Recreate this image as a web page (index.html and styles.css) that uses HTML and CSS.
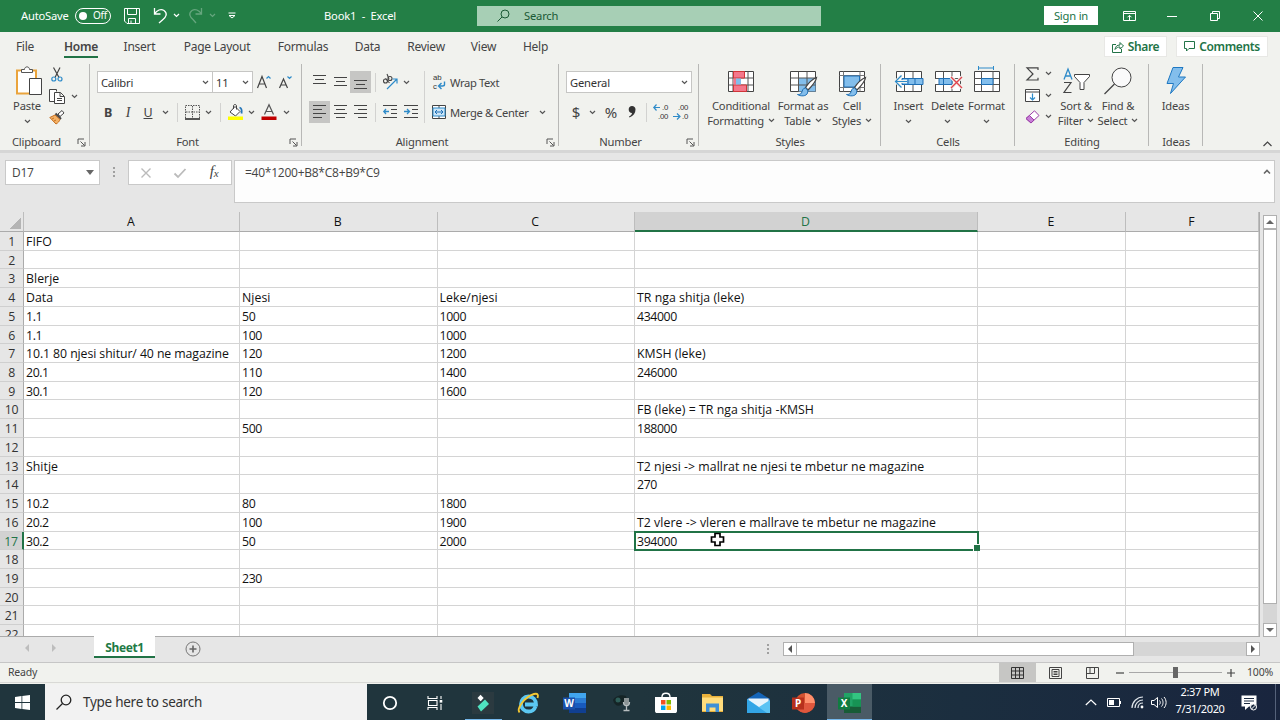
FILE: index.html
```html
<!DOCTYPE html>
<html lang="en">
<head>
  <meta charset="UTF-8" />
  <title>Book1 - Excel</title>
  <meta name="viewport" content="width=device-width, initial-scale=1" />
  <link rel="stylesheet" href="styles.css">
</head>
<body>
  <!-- shared icons -->
  <svg class="defs">
    <symbol id="chev" viewBox="0 0 7 5"><path d="M1 1l2.5 2.5L6 1" fill="none" stroke="currentColor" stroke-width="1.2"/></symbol>
    <symbol id="launch" viewBox="0 0 9 9"><path d="M1 6V1h6M3.5 3.500l4 4M8 4v4H4" fill="none" stroke="#555" stroke-width="1"/></symbol>
    <symbol id="brush" viewBox="0 0 22 22"><path d="M20.500 1.500c-5 2-9 7-11 10l2.500 2.500c4-4 8-8 8.500-12.500z" fill="#fff" stroke="#444" stroke-width="1.300"/><path d="M9.500 12c-3 0-3 3-4 5-1 1.500-2.500 1.500-4 1.500 3 2 9 2 10-1.500.6-2 .2-3.500-2-5z" fill="#83beec" stroke="#1e6fb5"/></symbol>
  </svg>

  <header class="titlebar">
    <span class="autosave">AutoSave</span>
    <span class="toggle"><i></i>Off</span>
    <svg width="16" height="16" viewBox="0 0 16 16"><path d="M.5.5h15v15H3l-2.500-2.500zM3.500.5v6h9v-6M4.500 15.500v-5h7v5M7 15v-2.500" fill="none" stroke="#fff"/></svg>
    <svg width="15" height="17" viewBox="0 0 15 17"><path d="M1.500 1v6h6M1.500 7C4 3 8 1.500 11 3.500c4 3 2 6.500-1 9L6 16" fill="none" stroke="#fff" stroke-width="1.300"/></svg>
    <svg class="chev"><use href="#chev"/></svg>
    <svg class="dim" width="15" height="17" viewBox="0 0 15 17"><path d="M13.500 1v6h-6M13.500 7C11 3 7 1.500 4 3.500c-4 3-2 6.500 1 9L8 16" fill="none" stroke="#fff" stroke-width="1.300"/></svg>
    <svg class="chev dim"><use href="#chev"/></svg>
    <svg width="8" height="7" viewBox="0 0 8 7"><path d="M.5 1h7" stroke="#fff"/><path d="M1 3.500l3 2.500 3-2.500z" fill="none" stroke="#fff"/></svg>
    <span class="doc">Book1 &nbsp;- &nbsp;Excel</span>
    <div class="search">
      <svg width="13" height="13" viewBox="0 0 13 13"><circle cx="8" cy="5" r="4" fill="none" stroke="#1b5a35"/><path d="M5 8l-4.500 4.500" stroke="#1b5a35"/></svg>
      Search
    </div>
    <button class="signin">Sign in</button>
    <svg width="13" height="10" viewBox="0 0 13 10"><path d="M.5.5h12v9H.5zM.5 2.500h12M6.500 9V4.500M4.500 6.300l2-2 2 2" fill="none" stroke="#fff"/></svg>
    <svg width="10" height="10" viewBox="0 0 10 10"><path d="M0 5.500h10" stroke="#fff"/></svg>
    <svg width="10" height="10" viewBox="0 0 10 10"><path d="M.5 2.500h7v7h-7zM2.500 2.500v-2h7v7h-2" fill="none" stroke="#fff"/></svg>
    <svg width="10" height="10" viewBox="0 0 10 10"><path d="M.5.5l9 9M9.500.5l-9 9" stroke="#fff"/></svg>
  </header>

  <nav class="tabs">
    <span>File</span><span class="active">Home</span><span>Insert</span><span>Page Layout</span><span>Formulas</span><span>Data</span><span>Review</span><span>View</span><span>Help</span>
    <div class="tab-actions">
      <button class="share"><svg width="12" height="12" viewBox="0 0 12 12"><path d="M4 3.500H.5v8h9V8M3 8.500c.3-3 2-4.500 5-4.500V1.500L11.500 5 8 8V6C6 6 4.500 6.500 3 8.500z" fill="none" stroke="#217346"/></svg>Share</button>
      <button class="comments"><svg width="11" height="11" viewBox="0 0 11 11"><path d="M.5.5h10v7H5L2.500 10V7.500h-2z" fill="none" stroke="#217346"/></svg>Comments</button>
    </div>
  </nav>

  <section class="ribbon">
    <div class="group g-clipboard">
      <div class="body">
        <div class="big paste">
          <svg width="28" height="30" viewBox="0 0 28 30"><path d="M2 4.500h19v23H2z" fill="#fff" stroke="#eaa43c" stroke-width="2"/><path d="M5 6h13" stroke="#fff"/><path d="M6.500 6.500v-3h3c0-3.500 5-3.500 5 0h3v3z" fill="#fff" stroke="#555"/><path d="M14.500 12.500h12v16h-12z" fill="#fff" stroke="#444"/></svg>
          <span>Paste</span>
          <svg class="chev"><use href="#chev"/></svg>
        </div>
        <div class="clip-tools">
          <svg width="12" height="15" viewBox="0 0 12 15"><path d="M2.500.5l5.500 10M9 .5L4 10.500" stroke="#444" stroke-width="1.200"/><circle cx="2.800" cy="12" r="2" fill="none" stroke="#2e8bc9" stroke-width="1.200"/><circle cx="9" cy="12" r="2" fill="none" stroke="#2e8bc9" stroke-width="1.200"/></svg><i></i>
          <svg width="16" height="15" viewBox="0 0 16 15"><path d="M5.500 12.500h-5V.5h7v2" fill="#fff" stroke="#444"/><path d="M5.500 3.500h6l4 4v7h-10zM11 3.500v4h4M8 9.500h5M8 11.500h5" fill="#fff" stroke="#444"/></svg>
          <svg class="chev"><use href="#chev"/></svg>
          <svg width="16" height="15" viewBox="0 0 16 15"><path d="M9 4l4-3.500L15 3l-4 3.500z" fill="#fff" stroke="#444"/><path d="M6.500 3.500l5.500 5.500" stroke="#444" stroke-width="2"/><path d="M6 5L.8 7.500 7 14c2-1 3.500-3 4-4.500z" fill="#f4b266" stroke="#c66f20"/><path d="M3 9l2-1M5 11l2-1" stroke="#c66f20"/></svg>
        </div>
      </div>
      <div class="name"><span>Clipboard</span><svg class="launch"><use href="#launch"/></svg></div>
    </div>

    <div class="group g-font">
      <div class="body rows">
        <div class="font-top">
          <div class="select">Calibri<svg class="chev"><use href="#chev"/></svg></div>
          <div class="select size">11<svg class="chev"><use href="#chev"/></svg></div>
          <svg width="14" height="14" viewBox="0 0 14 14"><path d="M.5 13L5 1.500 9.500 13M2 9h6" fill="none" stroke="#444" stroke-width="1.200"/><path d="M9.500 3.500L11.500 1.500l2 2" fill="none" stroke="#2e8bc9" stroke-width="1.200"/></svg>
          <svg width="13" height="14" viewBox="0 0 13 14"><path d="M.5 13L4.500 4 8.500 13M2 10h5" fill="none" stroke="#444" stroke-width="1.200"/><path d="M8.500 1.500l2 2 2-2" fill="none" stroke="#2e8bc9" stroke-width="1.200"/></svg>
        </div>
        <div class="font-bottom">
          <b>B</b><em>I</em><u>U</u>
          <svg class="chev"><use href="#chev"/></svg>
          <i class="sep"></i>
          <svg width="15" height="15" viewBox="0 0 15 15"><path d="M.5 13V.5h14V13M7.500 1v12M1 7h13" fill="none" stroke="#555" stroke-dasharray="1.500 1"/><path d="M0 14h15" stroke="#222" stroke-width="1.500"/></svg>
          <svg class="chev"><use href="#chev"/></svg>
          <i class="sep"></i>
          <svg width="16" height="16" viewBox="0 0 16 16"><path d="M7 2.500l5 5-4.500 4.500-5.500-4z" fill="#fff" stroke="#444"/><path d="M5.500 5V2c0-2 3-2 3 0v3.500" fill="none" stroke="#444"/><path d="M11.500 3.500c2 .5 2.500 3 2 6" fill="none" stroke="#2475b8" stroke-width="1.800"/><path d="M0 12.500h15V16H0z" fill="#ffff00"/></svg>
          <svg class="chev"><use href="#chev"/></svg>
          <svg width="16" height="16" viewBox="0 0 16 16"><path d="M3.500 10.500L8 .8l4.500 9.700M5 7.500h6" fill="none" stroke="#555" stroke-width="1.200"/><path d="M.5 12.500h15V16H.5z" fill="#c00000"/></svg>
          <svg class="chev"><use href="#chev"/></svg>
        </div>
      </div>
      <div class="name"><span>Font</span><svg class="launch"><use href="#launch"/></svg></div>
    </div>

    <div class="group g-align">
      <div class="body">
        <div class="align-left">
          <svg width="13" height="14" viewBox="0 0 13 14"><path d="M0 .5h13M2 4.500h9M0 8.500h13" stroke="#444"/></svg>
          <svg width="13" height="14" viewBox="0 0 13 14"><path d="M0 2.500h13M2 6.500h9M0 10.500h13" stroke="#444"/></svg>
          <span class="on"><svg width="13" height="14" viewBox="0 0 13 14"><path d="M0 5.500h13M2 9.500h9M0 13.500h13" stroke="#444"/></svg></span>
          <i class="sep"></i>
          <svg width="16" height="16" viewBox="0 0 16 16"><g fill="none" stroke="#444" stroke-width="1.100"><circle cx="3.500" cy="7" r="2"/><path d="M3.500 4.500l4 4.500"/><circle cx="8" cy="4.500" r="2"/><path d="M5 0l2 5"/></g><path d="M5 15L14.500 5.500M10.500 5h4.500v4.500" fill="none" stroke="#2e8bc9" stroke-width="1.200"/></svg>
          <svg class="chev"><use href="#chev"/></svg>
          <span class="on"><svg width="13" height="14" viewBox="0 0 13 14"><path d="M0 .5h13M0 4.500h9M0 8.500h13M0 12.500h9" stroke="#444"/></svg></span>
          <svg width="13" height="14" viewBox="0 0 13 14"><path d="M0 .5h13M2 4.500h9M0 8.500h13M2 12.500h9" stroke="#444"/></svg>
          <svg width="13" height="14" viewBox="0 0 13 14"><path d="M0 .5h13M4 4.500h9M0 8.500h13M4 12.500h9" stroke="#444"/></svg>
          <i class="sep"></i>
          <svg width="14" height="14" viewBox="0 0 14 14"><path d="M0 .5h14M8 4.500h6M8 8.500h6M0 12.500h14" stroke="#444"/><path d="M6 6.500H1M3 4L.8 6.500 3 9" fill="none" stroke="#2e8bc9" stroke-width="1.300"/></svg>
          <svg width="14" height="14" viewBox="0 0 14 14"><path d="M0 .5h14M8 4.500h6M8 8.500h6M0 12.500h14" stroke="#444"/><path d="M0 6.500h5M3 4l2.500 2.500L3 9" fill="none" stroke="#2e8bc9" stroke-width="1.300"/></svg>
        </div>
        <div class="align-right">
          <div><svg width="14" height="18" viewBox="0 0 14 18"><text x="1" y="7" class="tiny">ab</text><text x="1" y="16" class="tiny">c</text><path d="M12.500 8.500v3c0 1-1 1.500-2 1.500H7M9.500 10L6.500 13l3 3" fill="none" stroke="#2e8bc9" stroke-width="1.400"/></svg><span>Wrap Text</span></div>
          <div><svg width="14" height="14" viewBox="0 0 14 14"><path d="M.5.5h13v13H.5z" fill="#fff" stroke="#444"/><path d="M7 .5V3M7 11v2.500" stroke="#444"/><path d="M1 3h12v8H1z" fill="#cde6f7" stroke="#2e8bc9"/><path d="M3 7h8M5 5L3 7l2 2M9 5l2 2-2 2" fill="none" stroke="#1e6fb5"/></svg><span>Merge &amp; Center</span><svg class="chev"><use href="#chev"/></svg></div>
        </div>
      </div>
      <div class="name"><span>Alignment</span><svg class="launch"><use href="#launch"/></svg></div>
    </div>

    <div class="group g-number">
      <div class="body rows">
        <div class="select general">General<svg class="chev"><use href="#chev"/></svg></div>
        <div class="number-bottom">
          <span>$</span>
          <svg class="chev"><use href="#chev"/></svg>
          <span>%</span>
          <svg width="8" height="12" viewBox="0 0 8 12"><path d="M4 0c2 0 3.500 1.200 3.500 3.500C7.500 7 5.500 10 1.500 11.500l-.5-1c2-1 2.800-2 3-3.500C2 7 .7 5.500.7 3.500.7 1.500 2 0 4 0z" fill="#333"/></svg>
          <i class="sep"></i>
          <svg width="16" height="18" viewBox="0 0 16 18"><path d="M7 4.500H1M3.500 1.500l-2.700 3 2.700 3" fill="none" stroke="#2e8bc9" stroke-width="1.200"/><text x="9" y="7" class="tiny">.0</text><text x="5" y="16" class="tiny">.00</text></svg>
          <svg width="16" height="18" viewBox="0 0 16 18"><text x="5" y="7" class="tiny">.00</text><text x="9" y="16" class="tiny">.0</text><path d="M0 13.500h6M4 10.500l3 3-3 3" fill="none" stroke="#2e8bc9" stroke-width="1.200"/></svg>
        </div>
      </div>
      <div class="name"><span>Number</span><svg class="launch"><use href="#launch"/></svg></div>
    </div>

    <div class="group g-styles">
      <div class="body">
        <div class="big">
          <svg width="28" height="30" viewBox="0 0 28 30"><path d="M1.500 5.500h25v20h-25z" fill="#fff" stroke="#444"/><path d="M1.500 12h25M1.500 19h25M6 5.500v20M21 5.500v20" stroke="#555"/><path d="M6.500 5.500h11v6.500h-11zM6.500 19h13v6.500h-13z" fill="#f4788c" stroke="#d13438"/><path d="M6.500 12.500h4v6h-4z" fill="#f4788c"/><path d="M9 12.500h5v6H9z" fill="#83beec"/></svg>
          <span>Conditional</span><span>Formatting <svg class="chev"><use href="#chev"/></svg></span>
        </div>
        <div class="big">
          <svg width="28" height="30" viewBox="0 0 28 30"><path d="M1.500 5.500h25v20h-25z" fill="#fff" stroke="#444"/><path d="M9.500 12h17v13.500h-17z" fill="#83beec"/><path d="M1.500 12h25M1.500 19h25M9.500 5.500v20M18 5.500v20" stroke="#555"/><use href="#brush" x="7" y="10" width="22" height="22"/></svg>
          <span>Format as</span><span>Table <svg class="chev"><use href="#chev"/></svg></span>
        </div>
        <div class="big">
          <svg width="28" height="30" viewBox="0 0 28 30"><path d="M1.500 5.500h25v20h-25z" fill="#fff" stroke="#444"/><path d="M1.500 9.500h25M1.500 21.500h25M5.500 5.500v20M22 5.500v20" stroke="#777"/><path d="M6 10h15.500v11H6z" fill="#83beec" stroke="#1e6fb5"/><use href="#brush" x="7" y="10" width="22" height="22"/></svg>
          <span>Cell</span><span>Styles <svg class="chev"><use href="#chev"/></svg></span>
        </div>
      </div>
      <div class="name"><span>Styles</span></div>
    </div>

    <div class="group g-cells">
      <div class="body">
        <div class="big">
          <svg width="30" height="30" viewBox="0 0 30 30"><path d="M2.500 5.500h25v20h-25z" fill="#fff" stroke="#444"/><path d="M10.500 5.500v20M19 5.500v20" stroke="#555"/><path d="M8 12.500h21v6H8z" fill="#83beec" stroke="#1e6fb5"/><path d="M21 12.500v6M14 12.500v6" stroke="#1e6fb5"/><path d="M13 15.500H1.500M7.500 9.500l-6 6 6 6" fill="none" stroke="#f1f2ee" stroke-width="3"/><path d="M13 15.500H1.500M7.500 9.500l-6 6 6 6" fill="none" stroke="#2e8bc9" stroke-width="1.200"/></svg>
          <span>Insert</span><svg class="chev"><use href="#chev"/></svg>
        </div>
        <div class="big">
          <svg width="30" height="30" viewBox="0 0 30 30"><path d="M2.500 12.500v-7h25v20h-25v-7" fill="#fff" stroke="#444"/><path d="M10.500 5.500v20M19 5.500v20M2 12.500h25M2 18.500h25" stroke="#555"/><path d="M6 12.500h13v6H6z" fill="#83beec" stroke="#1e6fb5"/><path d="M10.500 12.500v6" stroke="#1e6fb5"/><path d="M18 11l11 11M29 11L18 22" stroke="#f1f2ee" stroke-width="3.500"/><path d="M18 11l11 11M29 11L18 22" stroke="#e0434c" stroke-width="1.400"/></svg>
          <span>Delete</span><svg class="chev"><use href="#chev"/></svg>
        </div>
        <div class="big">
          <svg width="30" height="30" viewBox="0 0 30 30"><path d="M2.500 5.500h25v20h-25z" fill="#fff" stroke="#444"/><path d="M9.500 5.500v20M21 5.500v20M2 12.500h25M2 18.500h25" stroke="#555"/><path d="M9.500 12.500H21v6H9.500z" fill="#83beec" stroke="#1e6fb5"/><path d="M6.500 2h15M6.500 0v4M21.500 0v4" stroke="#2e8bc9"/></svg>
          <span>Format</span><svg class="chev"><use href="#chev"/></svg>
        </div>
      </div>
      <div class="name"><span>Cells</span></div>
    </div>

    <div class="group g-editing">
      <div class="body">
        <div class="edit-tools">
          <svg width="13" height="14" viewBox="0 0 13 14"><path d="M12 3V.8H1L7 7l-6 6h11v-2.300" fill="none" stroke="#444" stroke-width="1.200"/></svg>
          <svg class="chev"><use href="#chev"/></svg>
          <svg width="15" height="13" viewBox="0 0 15 13"><path d="M.5.5h14v12H.5zM.5 3h14" fill="#fff" stroke="#444"/><path d="M7.500 4.500V11M5 8.500L7.500 11 10 8.500" fill="none" stroke="#2e8bc9" stroke-width="1.200"/></svg>
          <svg class="chev"><use href="#chev"/></svg>
          <svg width="15" height="14" viewBox="0 0 15 14"><path d="M9.500.8L14 5.500 6 13 1 8.500z" fill="#fff" stroke="#9b3fa8"/><path d="M4.500 5.500L9 10l-3 3-5-4.500z" fill="#c87fd6" stroke="#9b3fa8"/></svg>
          <svg class="chev"><use href="#chev"/></svg>
        </div>
        <div class="big">
          <svg width="28" height="30" viewBox="0 0 28 30"><path d="M2 13.500L6 3l4 10.500M3.500 10h5" fill="none" stroke="#2e8bc9" stroke-width="1.300"/><path d="M2 16.500h7L2 26.500h7.500" fill="none" stroke="#444" stroke-width="1.200"/><path d="M12.500 8.500h15v2L22 16.500v7h-4v-7l-5.500-6z" fill="#fff" stroke="#444"/></svg>
          <span>Sort &amp;</span><span>Filter <svg class="chev"><use href="#chev"/></svg></span>
        </div>
        <div class="big">
          <svg width="28" height="30" viewBox="0 0 28 30"><circle cx="17.500" cy="11.500" r="9.500" fill="#fafafa" stroke="#444"/><path d="M10.500 18L.5 28" stroke="#444" stroke-width="1.200"/></svg>
          <span>Find &amp;</span><span>Select <svg class="chev"><use href="#chev"/></svg></span>
        </div>
      </div>
      <div class="name"><span>Editing</span></div>
    </div>

    <div class="group g-ideas">
      <div class="body">
        <div class="big">
          <svg width="22" height="30" viewBox="0 0 22 30"><path d="M8 1.500h10L13.500 11H20.500L5.500 27.500 8.500 17.500H2z" fill="#83beec" stroke="#1e78c2"/></svg>
          <span>Ideas</span>
        </div>
      </div>
      <div class="name"><span>Ideas</span></div>
    </div>

    <svg class="collapse" width="9" height="6" viewBox="0 0 9 6"><path d="M.5 5l4-4 4 4" fill="none" stroke="#444" stroke-width="1.200"/></svg>
  </section>

  <section class="formula-bar">
    <div class="name-box">D17<i class="tri"></i></div>
    <i class="dots"></i>
    <div class="fx-box">
      <svg width="10" height="10" viewBox="0 0 10 10"><path d="M.5.5l9 9M9.500.5l-9 9" stroke="#bbb" stroke-width="1.400"/></svg>
      <svg width="12" height="10" viewBox="0 0 12 10"><path d="M.5 5.500L4 9 11.500 1" fill="none" stroke="#bbb" stroke-width="1.800"/></svg>
      <span><i>f</i><sub>x</sub></span>
    </div>
    <div class="formula">=40*1200+B8*C8+B9*C9<svg width="8" height="6" viewBox="0 0 8 6"><path d="M1 4.500l3-3 3 3" fill="none" stroke="#666" stroke-width="1.600"/></svg></div>
  </section>

  <main class="workbook">
    <div class="sheet">
      <div class="row head"><i class="corner"></i><span>A</span><span>B</span><span>C</span><span class="sel">D</span><span>E</span><span>F</span></div>
      <div class="row"><b>1</b><span>FIFO</span><span></span><span></span><span></span><span></span><span></span></div>
      <div class="row"><b>2</b><span></span><span></span><span></span><span></span><span></span><span></span></div>
      <div class="row"><b>3</b><span>Blerje</span><span></span><span></span><span></span><span></span><span></span></div>
      <div class="row"><b>4</b><span>Data</span><span>Njesi</span><span>Leke/njesi</span><span>TR nga shitja (leke)</span><span></span><span></span></div>
      <div class="row"><b>5</b><span class="n">1.1</span><span class="n">50</span><span class="n">1000</span><span class="n">434000</span><span></span><span></span></div>
      <div class="row"><b>6</b><span class="n">1.1</span><span class="n">100</span><span class="n">1000</span><span></span><span></span><span></span></div>
      <div class="row"><b>7</b><span class="mixed">10.1 80 njesi shitur/ 40 ne magazine</span><span class="n">120</span><span class="n">1200</span><span>KMSH (leke)</span><span></span><span></span></div>
      <div class="row"><b>8</b><span class="n">20.1</span><span class="n">110</span><span class="n">1400</span><span class="n">246000</span><span></span><span></span></div>
      <div class="row"><b>9</b><span class="n">30.1</span><span class="n">120</span><span class="n">1600</span><span></span><span></span><span></span></div>
      <div class="row"><b>10</b><span></span><span></span><span></span><span>FB (leke) = TR nga shitja -KMSH</span><span></span><span></span></div>
      <div class="row"><b>11</b><span></span><span class="n">500</span><span></span><span class="n">188000</span><span></span><span></span></div>
      <div class="row"><b>12</b><span></span><span></span><span></span><span></span><span></span><span></span></div>
      <div class="row"><b>13</b><span>Shitje</span><span></span><span></span><span>T2 njesi -&gt; mallrat ne njesi te mbetur ne magazine</span><span></span><span></span></div>
      <div class="row"><b>14</b><span></span><span></span><span></span><span class="n">270</span><span></span><span></span></div>
      <div class="row"><b>15</b><span class="n">10.2</span><span class="n">80</span><span class="n">1800</span><span></span><span></span><span></span></div>
      <div class="row"><b>16</b><span class="n">20.2</span><span class="n">100</span><span class="n">1900</span><span>T2 vlere -&gt; vleren e mallrave te mbetur ne magazine</span><span></span><span></span></div>
      <div class="row"><b class="sel">17</b><span class="n">30.2</span><span class="n">50</span><span class="n">2000</span><span class="n cursor-cell">394000<svg class="pointer" width="15" height="15" viewBox="0 0 15 15"><path d="M5 1.500h5V5h3.500v5H10v3.500H5V10H1.500V5H5z" fill="#fff" stroke="#000" stroke-width="1.700"/></svg></span><span></span><span></span></div>
      <div class="row"><b>18</b><span></span><span></span><span></span><span></span><span></span><span></span></div>
      <div class="row"><b>19</b><span></span><span class="n">230</span><span></span><span></span><span></span><span></span></div>
      <div class="row"><b>20</b><span></span><span></span><span></span><span></span><span></span><span></span></div>
      <div class="row"><b>21</b><span></span><span></span><span></span><span></span><span></span><span></span></div>
      <div class="row"><b>22</b><span></span><span></span><span></span><span></span><span></span><span></span></div>
    </div>
    <div class="vscroll">
      <div class="sbtn"><i class="tri up"></i></div>
      <div class="thumb"></div>
      <div class="sbtn end"><i class="tri"></i></div>
    </div>
  </main>

  <section class="sheet-tabs">
    <i class="nav prev"></i><i class="nav next"></i>
    <div class="sheet-tab">Sheet1</div>
    <svg class="add" width="16" height="16" viewBox="0 0 16 16"><circle cx="8" cy="8" r="7" fill="none" stroke="#777"/><path d="M8 4.500v7M4.500 8h7" stroke="#666" stroke-width="1.600"/></svg>
    <i class="dots"></i>
    <div class="hscroll">
      <div class="sbtn"><i class="tri left"></i></div>
      <div class="thumb"></div>
      <div class="sbtn end"><i class="tri right"></i></div>
    </div>
  </section>

  <footer class="status">
    <span class="ready">Ready</span>
    <span class="view on"><svg width="13" height="12" viewBox="0 0 13 12"><path d="M.5.5h12v11H.5zM.5 4h12M.5 8h12M4.500.5v11M8.500.5v11" fill="none" stroke="#333"/></svg></span>
    <span class="view"><svg width="13" height="12" viewBox="0 0 13 12"><path d="M.5.5h12v11H.5zM3 2.500h7v7H3zM4.500 4.500h4M4.500 6h4M4.500 7.500h4" fill="none" stroke="#444"/></svg></span>
    <span class="view"><svg width="13" height="12" viewBox="0 0 13 12"><path d="M.5.500h12v11H.5zM4 .5v6M8.500.5v6M.5 6.500h8" fill="none" stroke="#444"/></svg></span>
    <svg width="8" height="8" viewBox="0 0 8 8"><path d="M0 4h8" stroke="#444" stroke-width="1.200"/></svg>
    <span class="slider"><i></i></span>
    <svg width="8" height="8" viewBox="0 0 8 8"><path d="M0 4h8M4 0v8" stroke="#444" stroke-width="1.200"/></svg>
    <span class="zoom">100%</span>
  </footer>

  <footer class="taskbar">
    <span class="start"><svg width="15" height="15" viewBox="0 0 15 15"><path d="M0 2l6.500-1v6H0zM7.300.9L15 0v7H7.300zM0 8h6.500v6L0 13zM7.300 8H15v7l-7.700-1z" fill="#fff"/></svg></span>
    <div class="task-search"><svg width="16" height="16" viewBox="0 0 16 16"><circle cx="10" cy="6" r="4.800" fill="none" stroke="#222" stroke-width="1.300"/><path d="M6.500 9.500l-6 6" stroke="#222" stroke-width="1.300"/></svg>Type here to search</div>
    <div class="apps">
      <span><svg width="16" height="16" viewBox="0 0 16 16"><circle cx="8" cy="8" r="6.200" fill="none" stroke="#fff" stroke-width="1.800"/></svg></span>
      <span><svg width="16" height="16" viewBox="0 0 16 16"><path d="M1 1v2.500h9V1M1 15v-2.500h9V15M1.500 5.500h8.500v5H1.500zM14 1v3M14 9v6" fill="none" stroke="#fff" stroke-width="1.100"/><path d="M12.700 5h2.600v2.600h-2.600z" fill="#fff"/></svg></span>
      <span class="open"><svg width="22" height="22" viewBox="0 0 22 22"><path d="M0 0h22v22H0z" fill="#2b3a40"/><path d="M5.500 6l3-3.200 3.200 3.200-3 3.200z" fill="#fff"/><path d="M5.500 14.500l7.500-7 4 4.500-8 7.500z" fill="#4fe3c1"/></svg></span>
      <span><svg width="22" height="22" viewBox="0 0 22 22"><path d="M18.500 14.500c-1 3-4 5-7 5-4.500 0-7.500-3.500-7.500-7.500S7 4.500 11.500 4.500 19 8 19 12.500H8" fill="none" stroke="#5cc8f2" stroke-width="3.800"/><path d="M2.500 20.500C-.5 17 7 5 17 2c4-1 4.500 1 3.500 4" fill="none" stroke="#f5c932" stroke-width="1.900"/></svg></span>
      <span><svg width="23" height="20" viewBox="0 0 23 20"><path d="M6 0h17v20H6z" fill="#2b7cd3"/><path d="M6 0h17v5H6z" fill="#41a5ee"/><path d="M6 10h17v5H6z" fill="#185abd"/><path d="M6 15h17v5H6z" fill="#103f91"/><path d="M0 4.500h12v12H0z" fill="#1a50ab"/><text x="6" y="14" class="letter">W</text></svg></span>
      <span><svg width="20" height="18" viewBox="0 0 20 18"><path d="M1 6c2-4 9-6 13-4l1 4-6 5c-3 2-7 0-8-5z" fill="#152426"/><circle cx="6" cy="6" r="2.500" fill="#2e5d58"/><path d="M12 4h5v7h-5z" fill="#8b9496"/><path d="M11.500 8c0 5 6 5 6 0M14.500 12v4M11.500 16.500h6" fill="none" stroke="#b7bec0" stroke-width="1.300"/></svg></span>
      <span><svg width="22" height="22" viewBox="0 0 22 22"><path d="M7 5c0-5 8-5 8 0" fill="none" stroke="#fff" stroke-width="1.400"/><path d="M0 5h22v14c0 1.500-1 2-2 2H2c-1 0-2-.5-2-2z" fill="#fff"/><path d="M6 8h4.500v4.500H6z" fill="#f25022"/><path d="M11.500 8H16v4.500h-4.500z" fill="#7fba00"/><path d="M6 13.500h4.500V18H6z" fill="#00a4ef"/><path d="M11.500 13.500H16V18h-4.500z" fill="#ffb900"/></svg></span>
      <span><svg width="21" height="18" viewBox="0 0 21 18"><path d="M0 0h8l2 2h11v16H0z" fill="#e9b13b"/><path d="M0 3.500h21V17H0z" fill="#ffdc7c"/><path d="M4 18V9.500h13V18h-3.500v-4.500h-6V18z" fill="#3f8fd6"/></svg></span>
      <span><svg width="23" height="21" viewBox="0 0 23 21"><path d="M0 7l11.500-7L23 7v14H0z" fill="#1565b8"/><path d="M1.500 6.500h20L23 21H0z" fill="#e8f4fc"/><path d="M0 7l12 8L23 8v13H0z" fill="#5cc3f3"/><path d="M0 7l20 14H0z" fill="#33a5e6"/></svg></span>
      <span><svg width="23" height="20" viewBox="0 0 23 20"><circle cx="13" cy="10" r="10" fill="#d35230"/><path d="M13 0a10 10 0 0110 10H13z" fill="#ff8f6b"/><path d="M23 10a10 10 0 01-19 4l9-4z" fill="#e0573d"/><path d="M0 4.500h12v12H0z" fill="#b7301c"/><text x="6" y="14" class="letter">P</text></svg></span>
      <span class="open current"><svg width="23" height="20" viewBox="0 0 23 20"><path d="M6 0h17v20H6z" fill="#21a366"/><path d="M14.500 0H23v6.500h-8.500z" fill="#33c481"/><path d="M6 13.500h17V20H6z" fill="#185c37"/><path d="M14.500 6.500H23v7h-8.500z" fill="#179354"/><path d="M0 4.500h12v12H0z" fill="#107c41"/><text x="6" y="14" class="letter">X</text></svg></span>
    </div>
    <div class="tray">
      <svg width="12" height="7" viewBox="0 0 12 7"><path d="M.8 6L6 1l5.200 5" fill="none" stroke="#fff" stroke-width="1.200"/></svg>
      <svg width="14" height="9" viewBox="0 0 14 9"><path d="M.5.5h12v8H.5z" fill="none" stroke="#fff"/><path d="M2 2h5v5H2zM12.500 3H14v3h-1.500z" fill="#fff"/></svg>
      <svg width="13" height="13" viewBox="0 0 13 13"><g fill="none" stroke="#dfe5ea" stroke-width="1.200"><path d="M1 12C1 6 6 1 12 1"/><path d="M4 12c0-4.500 3.500-8 8-8"/><path d="M7 12c0-3 2-5 5-5"/></g><circle cx="11" cy="11" r="1.400" fill="#fff"/></svg>
      <svg width="16" height="13" viewBox="0 0 16 13"><path d="M.5 4.500H3l3.500-3v10L3 8.500H.5zM8.500 4.500c1 1 1 3 0 4M10.500 2.500c2 2 2 6 0 8M13 1c2.800 3 2.800 8 0 11" fill="none" stroke="#fff"/></svg>
      <div class="clock">2:37 PM<br>7/31/2020</div>
      <svg width="16" height="16" viewBox="0 0 16 16"><path d="M.5.5h15v11H8L4 15v-3.500H.5z" fill="#fff"/><path d="M3 3.500h10M3 6h10M3 8.500h6" stroke="#1b2a40"/><circle cx="12.500" cy="12" r="3" fill="#1b2a40" stroke="#fff"/><path d="M10.500 14l4-4" stroke="#fff"/></svg>
    </div>
  </footer>
</body>
</html>
```

FILE: styles.css
```css
* {
  box-sizing: border-box;
}
body {
  margin: 0;
  width: 1280px;
  height: 720px;
  overflow: hidden;
  background: #e6e6e6;
  color: #444;
  font-family: "Noto Sans", "Open Sans", sans-serif;
  font-size: 11.2px;
  letter-spacing: -0.2px;
  line-height: 15px;
}
svg {
  display: block;
  flex: none;
  overflow: visible;
}
button {
  border: none;
  padding: 0;
  background: #fff;
  color: #217346;
  font: inherit;
  letter-spacing: inherit;
}
.defs {
  display: none;
}
.chev {
  width: 7px;
  height: 5px;
  color: #555;
}
.dim {
  opacity: 0.3;
}
.sep {
  width: 1px;
  height: 19px;
  background: #d2d2d0;
}

/* title bar */
.titlebar {
  height: 32px;
  background: #237f46;
  color: #fff;
  display: grid;
  grid-template-columns: 72px 42px 36px 20px 12px 26px 8px 32px 224px 354px 272px 62px 24px 62px 24px;
  align-items: center;
  justify-items: center;
}
.titlebar > * {
  margin-top: -1px;
}
.titlebar .chev {
  color: #fff;
}
.autosave {
  justify-self: start;
  padding-left: 21px;
}
.toggle {
  width: 36px;
  height: 16px;
  border: 1px solid #fff;
  border-radius: 8px;
  display: flex;
  align-items: center;
  gap: 6px;
  padding-left: 3px;
  font-size: 10px;
}
.toggle i {
  width: 8px;
  height: 8px;
  border-radius: 50%;
  background: #fff;
}
.doc {
  white-space: nowrap;
}
.search {
  width: 344px;
  height: 20px;
  background: #a7cfb5;
  color: #1b5a35;
  display: flex;
  align-items: center;
  gap: 14px;
  padding-left: 20px;
}
.signin {
  justify-self: end;
  width: 54px;
  height: 19px;
}

/* tabs */
.tabs {
  height: 29px;
  background: #f1f2ee;
  display: grid;
  grid-template-columns: 50px 62px 55px 100px 72px 57px 60px 55px 49px 720px;
  justify-items: center;
  font-size: 12px;
  letter-spacing: -0.25px;
}
.tabs > span {
  height: 26px;
  padding-top: 7px;
}
.tabs .active {
  border-bottom: 2px solid #217346;
  font-weight: 600;
}
.tab-actions {
  justify-self: end;
  display: flex;
  gap: 9px;
  padding: 4px 12px 0 0;
}
.tab-actions button {
  height: 21px;
  display: flex;
  align-items: center;
  justify-content: center;
  gap: 4px;
  border: 1px solid #e8e8e5;
  font-weight: 600;
  letter-spacing: -0.4px;
}
.share {
  width: 63px;
}
.comments {
  width: 92px;
}

/* ribbon */
.ribbon {
  height: 92px;
  padding-top: 0;
  background: #f1f2ee;
  border-bottom: 3px solid #d6d6d6;
  display: flex;
}
.group {
  position: relative;
  height: 89px;
  display: flex;
  flex-direction: column;
}
.group::after {
  content: "";
  position: absolute;
  right: 0;
  top: 3px;
  width: 1px;
  height: 82px;
  background: #b8b8b6;
}
.g-clipboard { width: 90px; }
.g-font { width: 212px; }
.g-align { width: 257px; }
.g-number { width: 140px; }
.g-styles { width: 182px; }
.g-cells { width: 134px; }
.g-editing { width: 134px; }
.g-ideas { width: 54px; }
.body {
  height: 73px;
  display: flex;
}
.body.rows {
  flex-direction: column;
  gap: 8px;
  padding-top: 10px;
}
.name {
  height: 15px;
  display: flex;
  align-items: center;
}
.name span {
  flex: 1;
  text-align: center;
}
.launch {
  width: 9px;
  height: 9px;
  margin: 1px 4px 0 4px;
}
.big {
  display: flex;
  flex-direction: column;
  align-items: center;
  padding-top: 5px;
  white-space: nowrap;
}
.big > span {
  display: flex;
  align-items: center;
  gap: 4px;
}
.big > svg:first-child {
  margin-bottom: 2px;
}
.big > .chev {
  margin-top: 6px;
}
.paste {
  width: 54px;
}
.paste > svg:first-child {
  margin-left: 4px;
}
.clip-tools {
  display: grid;
  grid-template-columns: 20px 14px;
  grid-template-rows: 21px 22px 21px;
  align-items: center;
  justify-items: center;
  padding-top: 3px;
  margin-left: -7px;
}
.select {
  width: 116px;
  height: 22px;
  background: #fff;
  border: 1px solid #c6c6c4;
  padding: 0 3px;
  display: flex;
  align-items: center;
  justify-content: space-between;
  color: #333;
}
.select.size {
  width: 41px;
  margin-left: -1px;
}
.font-top {
  display: flex;
  align-items: center;
  padding-left: 7px;
}
.font-top > svg {
  margin-left: 4px;
}
.font-top > svg + svg {
  margin-left: 8px;
}
.font-bottom {
  height: 22px;
  padding-left: 8px;
  display: grid;
  grid-template-columns: 20px 20px 20px 14px 10px 20px 12px 12px 20px 10px 26px 8px;
  align-items: center;
  justify-items: center;
  font-size: 12.5px;
}
.font-bottom em {
  font-family: "Liberation Serif", serif;
  font-size: 14px;
}
.align-left {
  width: 123px;
  margin-top: 10px;
  height: 52px;
  padding-left: 7px;
  display: grid;
  grid-template-columns: 21px 20px 21px 9px 20px 21px;
  grid-template-rows: 22px 22px;
  row-gap: 8px;
  align-items: center;
  justify-items: center;
  border-right: 1px solid #d2d2d0;
}
.align-left .chev {
  margin-right: 8px;
}
.on {
  background: #c6c6c4;
}
.align-left .on {
  width: 21px;
  height: 22px;
  display: grid;
  place-items: center;
}
.align-right {
  padding: 10px 0 0 7px;
  display: flex;
  flex-direction: column;
  gap: 8px;
  letter-spacing: -0.35px;
}
.align-right div {
  height: 22px;
  display: flex;
  align-items: center;
  gap: 4px;
}
.align-right .chev {
  margin-left: 6px;
}
.tiny {
  font-family: "Liberation Sans", sans-serif;
  font-size: 7.8px;
  letter-spacing: -0.2px;
  fill: #333;
}
.general {
  width: 126px;
  margin-left: 7px;
}
.number-bottom {
  height: 22px;
  padding-left: 7px;
  display: grid;
  grid-template-columns: 20px 12px 26px 16px 12px 18px 22px;
  align-items: center;
  justify-items: center;
  font-size: 15px;
}
.g-styles .body {
  padding-left: 10px;
}
.g-styles .big { width: 64px; }
.g-styles .big + .big { width: 60px; }
.g-styles .big + .big + .big { width: 38px; }
.g-cells .body {
  padding-left: 8px;
}
.g-cells .big {
  width: 39px;
}
.edit-tools {
  width: 40px;
  padding: 2px 0 0 7px;
  display: grid;
  grid-template-columns: 20px 12px;
  grid-template-rows: 21px 22px 21px;
  align-items: center;
  justify-items: center;
}
.g-editing .big {
  width: 42px;
}
.g-ideas .big {
  width: 53px;
}
.collapse {
  margin: 80px 0 0 60px;
}

/* formula bar */
.formula-bar {
  height: 59px;
  padding: 7px 5px 0;
  display: flex;
  font-family: "Open Sans", sans-serif;
  font-size: 12px;
  letter-spacing: -0.25px;
}
.name-box {
  width: 95px;
  height: 25px;
  background: #fff;
  border: 1px solid #c9c9c9;
  padding: 0 5px 0 6px;
  display: flex;
  align-items: center;
  justify-content: space-between;
}
.tri {
  width: 0;
  height: 0;
  border: 4px solid transparent;
  border-bottom: none;
  border-top: 5px solid #666;
}
.tri.up { border: 4px solid transparent; border-top: none; border-bottom: 4px solid #666; }
.tri.left { border: 4px solid transparent; border-left: none; border-right: 4px solid #555; }
.tri.right { border: 4px solid transparent; border-right: none; border-left: 4px solid #555; }
.dots {
  width: 2px;
  height: 11px;
  margin: 7px 13px 0;
  background: repeating-linear-gradient(#a0a0a0 0 2px, transparent 2px 4px);
}
.fx-box {
  width: 104px;
  height: 25px;
  background: #fff;
  border: 1px solid #c9c9c9;
  display: grid;
  grid-template-columns: 34px 34px 34px;
  align-items: center;
  justify-items: center;
  font-family: "Liberation Serif", serif;
  font-size: 15px;
}
.fx-box sub {
  font-size: 11px;
  font-style: italic;
  vertical-align: -1px;
}
.formula {
  width: 1041px;
  height: 43px;
  margin-left: 2px;
  background: #fdfdfd;
  border: 1px solid #c9c9c9;
  padding: 4px 3px 0 10px;
  display: flex;
  justify-content: space-between;
}
.formula svg {
  margin-top: 4px;
}

/* grid */
.workbook {
  height: 425px;
  display: flex;
}
.sheet {
  width: 1260px;
  overflow: hidden;
  border-right: 1px solid #ababab;
  border-bottom: 1px solid #ababab;
  font-family: "Open Sans", sans-serif;
  font-size: 12.3px;
  letter-spacing: 0.04px;
  color: #111;
}
.row {
  height: 18.72px;
  display: grid;
  grid-template-columns: 24px 216px 197.5px 197.5px 343px 148px 133px;
  grid-template-rows: 18.72px;
  line-height: 19px;
}
.row span {
  background: #fff;
  border-right: 1px solid #d4d4d4;
  border-bottom: 1px solid #d4d4d4;
  padding-left: 2px;
  white-space: nowrap;
}
.row .n {
  letter-spacing: -0.4px;
}
.row .mixed {
  letter-spacing: -0.08px;
}
.row b {
  border-right: 1px solid #ababab;
  border-bottom: 1px solid #cfcfcf;
  font-weight: 400;
  letter-spacing: -0.4px;
  text-align: center;
  color: #333;
}
.row b.sel {
  background: #d2d2d2;
  border-right: 2px solid #217346;
  color: #217346;
}
.row.head {
  height: 20px;
  grid-template-rows: 20px;
}
.head span {
  background: none;
  border-right: 1px solid #bdbdbd;
  border-bottom: 1px solid #ababab;
  padding: 0 1px 0 0;
  text-align: center;
  line-height: 20px;
}
.head .sel {
  background: #d2d2d2;
  border-bottom: 2px solid #217346;
  color: #217346;
}
.corner {
  border-right: 1px solid #bdbdbd;
  border-bottom: 1px solid #ababab;
  background: linear-gradient(135deg, transparent 50%, #b4b4b4 50%) 9px 5px / 12px 12px no-repeat;
}
.row .cursor-cell {
  position: relative;
  outline: 2px solid #217346;
  outline-offset: -1px;
  border-color: transparent;
  z-index: 1;
}
.cursor-cell::after {
  content: "";
  position: absolute;
  right: -3px;
  bottom: -2px;
  width: 6px;
  height: 6px;
  background: #217346;
  border: solid #fff;
  border-width: 1px 0 0 1px;
}
.pointer {
  position: absolute;
  left: 75px;
  top: 0;
}

/* scroll bars */
.vscroll {
  width: 14px;
  height: 422px;
  margin: 3px 0 0 3px;
  background: #d6d6d6;
  display: flex;
  flex-direction: column;
}
.sbtn {
  width: 14px;
  height: 14px;
  background: #fff;
  border: 1px solid #b0b0b0;
  display: grid;
  place-items: center;
}
.sbtn .tri {
  border-width: 4px;
}
.sbtn .tri.up { border-top-width: 0; }
.sbtn .tri.left { border-left-width: 0; }
.sbtn .tri.right { border-right-width: 0; }
.sbtn .tri:not(.up):not(.left):not(.right) { border-bottom-width: 0; }
.thumb {
  background: #fff;
  border: 1px solid #b0b0b0;
}
.vscroll .thumb {
  height: 375px;
}
.vscroll .end {
  margin-top: auto;
}

/* sheet tabs */
.sheet-tabs {
  height: 26px;
  border-bottom: 1px solid #c6c6c6;
  display: flex;
}
.nav {
  width: 0;
  height: 0;
  border: 4px solid transparent;
  margin-top: 7px;
}
.prev {
  border-left: none;
  border-right-color: #bdbdbd;
  margin-left: 25px;
}
.next {
  border-right: none;
  border-left-color: #bdbdbd;
  margin-left: 23px;
}
.sheet-tab {
  width: 61px;
  height: 22px;
  margin: -1px 0 0 38px;
  background: #fff;
  border-bottom: 2px solid #217346;
  color: #1e7a45;
  font-size: 12px;
  font-weight: 700;
  letter-spacing: -0.4px;
  line-height: 24px;
  text-align: center;
}
.add {
  margin: 4px 0 0 30px;
}
.sheet-tabs .dots {
  margin: 7px 0 0 566px;
}
.hscroll {
  width: 477px;
  height: 14px;
  margin: 5px 0 0 14px;
  background: #d6d6d6;
  display: flex;
}
.hscroll .thumb {
  width: 338px;
  margin-left: -1px;
}
.hscroll .end {
  margin-left: auto;
}

/* status bar */
.status {
  height: 20px;
  background: #f1f2ee;
  border-bottom: 1px solid #d9d9d6;
  display: grid;
  grid-template-columns: 999px 37px 38px 37px 18px 93px 18px 40px;
  align-items: center;
  justify-items: center;
  font-size: 10.5px;
}
.ready {
  justify-self: start;
  padding-left: 8px;
}
.view {
  width: 37px;
  height: 19px;
  display: grid;
  place-items: center;
}
.slider {
  width: 93px;
  height: 1px;
  background: #a8a8a8;
  display: flex;
  align-items: center;
  justify-content: center;
}
.slider i {
  width: 5px;
  height: 11px;
  background: #666;
  flex: none;
}

/* taskbar */
.taskbar {
  height: 38px;
  border-top: 1px solid #f1f2ee;
  background: linear-gradient(90deg, #20353d 0%, #20353d 50%, #1b2e3f 75%, #19253e 100%);
  display: flex;
  color: #fff;
}
.start {
  width: 45px;
  display: grid;
  place-items: center;
}
.task-search {
  width: 322px;
  background: #f2f2f2;
  border-bottom: 1px solid #bbb;
  display: flex;
  align-items: center;
  gap: 11px;
  padding-left: 11px;
  color: #333;
  font-size: 13.5px;
  letter-spacing: -0.27px;
}
.apps {
  display: grid;
  grid-template-columns: 45px 46px 50px 40px 52px 44px 44px 48px 44px 47px 45px;
}
.apps span {
  display: grid;
  place-items: center;
}
.apps .open {
  width: 37px;
  justify-self: center;
  box-shadow: inset 0 -2px #76b9ed;
}
.apps .current {
  width: 45px;
  background: #4a5b66;
}
.letter {
  fill: #fff;
  font-size: 10px;
  font-weight: 700;
  letter-spacing: 0;
  text-anchor: middle;
}
.tray {
  margin-left: auto;
  padding-right: 8px;
  margin-right: 4px;
  border-right: 1px solid #55627a;
  display: grid;
  grid-template-columns: 22px 24px 23px 20px 62px 36px;
  align-items: center;
  justify-items: center;
}
.clock {
  margin-top: -5px;
  text-align: center;
  font-size: 11px;
  letter-spacing: -0.35px;
  line-height: 17px;
}
```
